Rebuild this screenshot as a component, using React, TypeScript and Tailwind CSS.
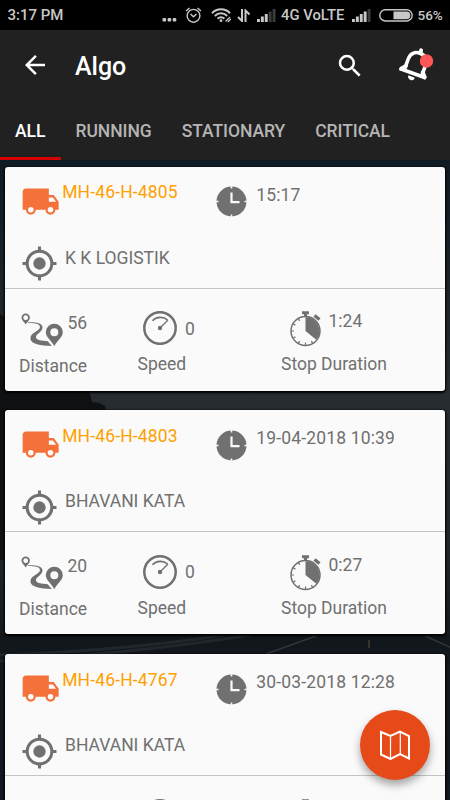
import type { ReactNode } from 'react';

const tabs = [
  { label: 'ALL', active: true },
  { label: 'RUNNING', active: false },
  { label: 'STATIONARY', active: false },
  { label: 'CRITICAL', active: false },
];

type Vehicle = {
  plate: string;
  time: string;
  place: string;
  stats?: { distance: string; speed: string; stop: string };
};

const vehicles: Vehicle[] = [
  { plate: 'MH-46-H-4805', time: '15:17', place: 'K K LOGISTIK', stats: { distance: '56', speed: '0', stop: '1:24' } },
  { plate: 'MH-46-H-4803', time: '19-04-2018 10:39', place: 'BHAVANI KATA', stats: { distance: '20', speed: '0', stop: '0:27' } },
  { plate: 'MH-46-H-4767', time: '30-03-2018 12:28', place: 'BHAVANI KATA' },
];

function SignalIcon({ bars }: { bars: number }) {
  return (
    <svg className="h-[13px] w-[19px]" viewBox="0 0 19 13">
      {[0, 1, 2, 3, 4].map((i) => (
        <rect key={i} x={i * 3.9} y={10 - i * 2.5} width="2.9" height={3 + i * 2.5} fill={i < bars ? '#c8c8c8' : '#3c3c3c'} />
      ))}
    </svg>
  );
}

function StatusBar() {
  return (
    <div className="flex h-[30px] items-center bg-black pl-[7px] text-[15.5px] font-medium text-[#c8c8c8]">
      <span className="w-[155px] shrink-0 pl-[0.5px] text-[15px] leading-5">3:17 PM</span>
      <svg className="mt-[9px] h-1 w-[15px]" viewBox="0 0 15 4" fill="#c8c8c8">
        <rect x="0.5" y="0" width="3.6" height="3.6" rx="1" />
        <rect x="5.6" y="0" width="3.6" height="3.6" rx="1" />
        <rect x="10.7" y="0" width="3.6" height="3.6" rx="1" />
      </svg>
      <svg className="ml-2 h-4 w-[17px]" viewBox="0 0 17 16" fill="none" stroke="#c8c8c8" strokeWidth="1.4">
        <circle cx="8.5" cy="8.8" r="6.4" />
        <path d="M5.5 7l3 2.800 3-2.800M1 4l3.500-3M16 4l-3.500-3" />
      </svg>
      <svg className="ml-[9px] h-4 w-[21px]" viewBox="0 0 21 16" fill="none" stroke="#c8c8c8" strokeWidth="2">
        <path d="M1 6.200a12.500 12.500 0 0 1 18 0M3.800 9a8.600 8.600 0 0 1 12.400 0M6.600 11.700a4.800 4.800 0 0 1 6.800 0" />
        <circle cx="10" cy="13.7" r="1.4" fill="#c8c8c8" stroke="none" />
        <path d="M14.500 14.500l4.500-4.500M16.800 15l3-3" strokeWidth="1.3" />
      </svg>
      <svg className="ml-[5px] h-[13px] w-[13px]" viewBox="0 0 13 13" fill="none" stroke="#c8c8c8" strokeWidth="2">
        <path d="M5 0v12L1 8M8.500 13V1.500l4 4" />
      </svg>
      <span className="ml-[7px]">
        <SignalIcon bars={3} />
      </span>
      <span className="ml-[5px] w-[66px] text-[14.8px] leading-5 whitespace-nowrap">4G VoLTE</span>
      <span className="ml-[5px]">
        <SignalIcon bars={4} />
      </span>
      <svg className="ml-[8px] h-[13px] w-[34px]" viewBox="0 0 34 13">
        <rect x="0.8" y="0.8" width="32.4" height="11.2" rx="5.6" fill="none" stroke="#c8c8c8" strokeWidth="1.4" />
        <path d="M14.500 2.600h13a3.800 3.800 0 0 1 0 7.600h-13z" fill="#c8c8c8" />
      </svg>
      <span className="ml-[4.5px] text-[13.5px] leading-5">56%</span>
    </div>
  );
}

function AppBar() {
  return (
    <header className="bg-[#212121]">
      <div className="flex h-[73px] items-center pt-px pl-[20px] text-white">
        <svg className="-mt-1 h-[30px] w-[30px]" viewBox="0 0 24 24" fill="white">
          <path d="M20 11H7.830l5.590-5.590L12 4l-8 8 8 8 1.410-1.410L7.830 13H20z" />
        </svg>
        <h1 className="-mt-px ml-[25px] w-[260px] text-[25px] leading-8 font-medium">Algo</h1>
        <svg className="-mt-[3px] h-[30px] w-[30px]" viewBox="0 0 24 24" fill="white">
          <path d="M15.500 14h-.79l-.28-.27A6.470 6.470 0 0 0 16 9.500 6.500 6.500 0 1 0 9.500 16c1.610 0 3.090-.59 4.230-1.570l.27.28v.79l5 4.990L20.490 19l-4.990-5zm-6 0a4.500 4.500 0 1 1 0-9 4.500 4.500 0 0 1 0 9z" />
        </svg>
        <svg className="-mt-[5px] ml-[32px] h-[36px] w-[38px]" viewBox="0 0 38 36">
          <g transform="translate(19 17.5) rotate(20)" fill="none" stroke="white">
            <path d="M-9.200 9V-2.500C-9.200-8.500-5.500-12 0-12S9.200-8.500 9.200-2.500V9" strokeWidth="3.6" />
            <path d="M-14 9.300H14" strokeWidth="3.6" />
            <path d="M-12.500 9l3.500-4M12.500 9l-3.500-4M0-12v-3" strokeWidth="4" strokeLinecap="round" />
            <path d="M-3.400 12.800a3.400 3.600 0 0 0 6.800 0z" fill="white" stroke="none" />
          </g>
          <circle cx="29.5" cy="14" r="6.700" fill="#ff5656" />
        </svg>
      </div>
      <nav className="flex h-[57px] text-[17.5px] font-medium">
        {tabs.map((tab) => (
          <div
            key={tab.label}
            className={
              tab.active
                ? 'border-b-[3px] border-[#d50000] px-[15px] pt-[18px] leading-5 text-white'
                : 'px-[15px] pt-[18px] leading-5 tracking-[-0.06px] text-[#b5b5b5]'
            }
          >
            {tab.label}
          </div>
        ))}
      </nav>
    </header>
  );
}

// Dark highway scene behind the list
function Backdrop() {
  return (
    <svg className="absolute inset-0 h-[640px] w-[450px]" viewBox="0 160 450 640">
      <defs>
        <linearGradient id="sky" x1="0" y1="0" x2="0" y2="1">
          <stop offset="0" stopColor="#101a22" />
          <stop offset="0.36" stopColor="#262c30" />
          <stop offset="0.6" stopColor="#20262a" />
          <stop offset="0.75" stopColor="#14191d" />
          <stop offset="1" stopColor="#101820" />
        </linearGradient>
      </defs>
      <rect y="160" width="450" height="640" fill="url(#sky)" />
      <path d="M0 314l30 20 35 50 20 4 5 6 2 8 7 1 6 3 1 4 20 150H0z" fill="#0f1011" />
      <path d="M0 634h450v30H0z" fill="#12171b" />
      <path d="M0 655q120-4 225-20M0 661q140-8 250-26" fill="none" stroke="#20262a" strokeWidth="3" />
      <path d="M266 654l50-18M425 636l25 11" stroke="#30363a" strokeWidth="1.5" />
      <path d="M369 640v8" stroke="#37322b" strokeWidth="2" />
    </svg>
  );
}

function TruckIcon() {
  return (
    <svg className="h-[39.3px] w-[39.3px]" viewBox="0 0 24 24" fill="#f4713a">
      <path d="M20 8h-3V4H3c-1.100 0-2 .9-2 2v11h2c0 1.660 1.340 3 3 3s3-1.340 3-3h6c0 1.660 1.340 3 3 3s3-1.340 3-3h2v-5l-3-4zM6 18.700a1.700 1.700 0 1 1 0-3.400 1.700 1.700 0 0 1 0 3.400zm13.500-9.200l1.960 2.500H17V9.500h2.500zM18 18.700a1.700 1.700 0 1 1 0-3.400 1.700 1.700 0 0 1 0 3.400z" />
    </svg>
  );
}

function ClockIcon() {
  return (
    <svg className="h-[31px] w-[31px]" viewBox="0 0 31 31">
      <circle cx="15.5" cy="15.5" r="15" fill="#707070" />
      <path d="M15.500 0v2.500M15.500 28.500V31M0 15.500h2.500M28.500 15.500H31" stroke="#fafafa" strokeWidth="1.5" />
      <path d="M15.500 6.500v9.700h8" fill="none" stroke="#fafafa" strokeWidth="2.2" />
    </svg>
  );
}

function TargetIcon() {
  return (
    <svg className="h-[37px] w-[37px]" viewBox="0 0 24 24" fill="none" stroke="#707070" strokeWidth="2">
      <circle cx="12" cy="12" r="8" />
      <circle cx="12" cy="12" r="4" fill="#707070" stroke="none" />
      <path d="M12 1v3M12 20v3M1 12h3M20 12h3" />
    </svg>
  );
}

function RouteIcon() {
  return (
    <svg className="h-[34px] w-[42px]" viewBox="0 0 42 34" fill="#707070">
      <path
        fillRule="evenodd"
        d="M4.700.5a4.200 4.200 0 0 1 4.200 4.200c0 2.500-3 4.500-4.200 6.800C3.500 9.200.5 7.200.5 4.700A4.200 4.200 0 0 1 4.700.5zm0 1.800a2.400 2.400 0 1 0 0 4.800 2.400 2.400 0 0 0 0-4.800z"
      />
      <path d="M7 10c5-.2 12 .5 12 4 0 4.500-10.500 5.500-9.500 12 .8 5 9.500 6.500 21.500 7-1.500-1.500-3-3-4.200-4.800-6-.5-11.300-.9-11.800-3.700-.5-3.700 6.500-5 6.500-10.200C21.500 9.500 13 9 7 9.300z" />
      <path
        fillRule="evenodd"
        d="M33.300 10.700a8.500 8.500 0 0 1 8.500 8.500c0 5-6 8.500-8.500 14-2.500-5.500-8.500-9-8.500-14a8.500 8.500 0 0 1 8.500-8.500zm0 4.500a4 4 0 1 0 0 8 4 4 0 0 0 0-8z"
      />
    </svg>
  );
}

function GaugeIcon() {
  return (
    <svg className="h-[34px] w-[34px]" viewBox="0 0 34 34" fill="none" stroke="#707070">
      <circle cx="17" cy="17" r="15.7" strokeWidth="2.5" />
      <path d="M9.500 9.800C13.500 5.300 20.500 5.300 24.500 9" strokeWidth="1.7" />
      <path d="M17 17l8-8" strokeWidth="1.2" />
      <circle cx="17" cy="17" r="2.2" fill="#707070" stroke="none" />
    </svg>
  );
}

function StopwatchIcon() {
  return (
    <svg className="h-9 w-8" viewBox="0 0 32 36" fill="none" stroke="#707070">
      <circle cx="15.5" cy="20" r="14.5" strokeWidth="1.5" />
      <path d="M15.500 20V6a14 14 0 0 1 10.800 22.800z" fill="#707070" stroke="none" />
      <path d="M12 1.700h7M15.500 2v4" strokeWidth="3" />
      <path d="M24.500 4.500l5 4" strokeWidth="3.5" />
      <path
        d="M15.500 34v-2.500M8.500 32.100l1.100-2M3.400 27l2-1.100M1.500 20H4M3.400 13l2 1.100M8.500 7.900l1.100 2M22.500 32.100l-1.100-2"
        strokeWidth="1.2"
      />
    </svg>
  );
}

function Stat({ icon, value, label, className }: { icon: ReactNode; value?: ReactNode; label?: string; className: string }) {
  return (
    <div className={className}>
      <div className="flex h-9">
        {icon}
        {value}
      </div>
      {label && <div className="pt-[7px] whitespace-nowrap">{label}</div>}
    </div>
  );
}

function VehicleCard({ vehicle }: { vehicle: Vehicle }) {
  const { stats } = vehicle;
  return (
    <article className="h-[224px] shrink-0 rounded-[3px] bg-[#fafafa] text-[17.5px] leading-5 text-[#707070] shadow-[0_1px_2px_1px_#000]">
      <div className="flex h-[78px] pt-[15px] pl-[16.4px]">
        <TruckIcon />
        <span className="ml-[1.5px] w-[153.5px] pt-[0.5px] tracking-[0.14px] text-[#ffa000]">{vehicle.plate}</span>
        <span className="pt-[4.5px]">
          <ClockIcon />
        </span>
        <span className="ml-[9.5px] pt-[3px] tracking-[0.16px]">{vehicle.time}</span>
      </div>
      <div className="flex h-[44px] border-b border-[#c4c4c4] pl-[16px]">
        <span className="pt-[0.7px]">
          <TargetIcon />
        </span>
        <span className="ml-[7px] pt-[3px]">{vehicle.place}</span>
      </div>
      <div className="flex pt-[22px]">
        <Stat
          className="ml-[14px] w-[118.5px] pt-[2px]"
          icon={<span className="ml-[2px]"><RouteIcon /></span>}
          value={stats && <span className="ml-[4.5px]">{stats.distance}</span>}
          label={stats && 'Distance'}
        />
        <Stat
          className="w-[143.5px] pt-[0.5px]"
          icon={<span className="ml-[5.5px]"><GaugeIcon /></span>}
          value={stats && <span className="ml-[8px] pt-[7.5px]">{stats.speed}</span>}
          label={stats && 'Speed'}
        />
        <Stat
          className="pt-[0.5px]"
          icon={<span className="ml-[8.5px]"><StopwatchIcon /></span>}
          value={stats && <span className="ml-[7px]">{stats.stop}</span>}
          label={stats && 'Stop Duration'}
        />
      </div>
    </article>
  );
}

export default function App() {
  return (
    <div className="relative flex h-[800px] w-[450px] flex-col overflow-hidden bg-[#101a22] font-['Roboto',sans-serif]">
      <StatusBar />
      <AppBar />
      <main className="relative min-h-0 flex-1 overflow-hidden">
        <Backdrop />
        <div className="relative flex flex-col gap-[19.7px] px-[5px] pt-[6.7px]">
          {vehicles.map((vehicle) => (
            <VehicleCard key={vehicle.plate} vehicle={vehicle} />
          ))}
        </div>
      </main>
      <button className="absolute right-5 bottom-5 flex h-[70px] w-[70px] items-center justify-center rounded-full bg-[#e64a19] shadow-[0_5px_9px_rgba(0,0,0,0.35)]">
        <svg className="h-[30px] w-[30px]" viewBox="0 0 30 30" fill="none" stroke="white">
          <path d="M1 2l9.500 4 9.500-4.500L29 6v22.500l-9-4.500-9.500 5L1 24.500z" strokeWidth="2" />
          <path d="M10.500 6v23M20.300 1.500V24" strokeWidth="1.2" />
        </svg>
      </button>
    </div>
  );
}
